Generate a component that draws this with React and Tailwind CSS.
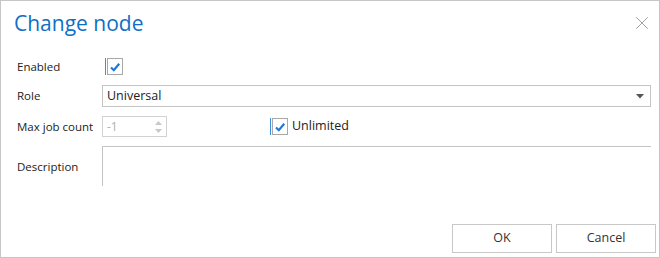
import { X } from 'lucide-react';

const Check = () => (
  <span className="flex h-[17px] items-stretch">
    <span className="w-px bg-[#3d8fdf]" />
    <span className="ml-px flex h-[17px] w-[16px] items-center justify-center border border-[#a8a8a8] bg-white">
      <svg width="12" height="12" viewBox="0 0 12 12">
        <path d="M2 6.5 L4.8 9.2 L10.2 2.8" fill="none" stroke="#1f78d8" strokeWidth="2.2" />
      </svg>
    </span>
  </span>
);

export default function App() {
  return (
    <div
      className="relative h-[258px] w-[660px] border border-[#c6c6c6] bg-white text-[#222]"
      style={{ fontFamily: '"Open Sans", "Liberation Sans", sans-serif' }}
    >
      {/* Header */}
      <div className="flex items-start justify-between pl-[13px] pr-[6px] pt-[6px]">
        <h1 className="text-[21px] leading-[32px] font-normal text-[#0f6fc6]">Change node</h1>
        <X size={22} strokeWidth={1} className="mt-[5px] text-[#9a9a9a]" />
      </div>

      {/* Form */}
      <div className="mt-[19px] flex flex-col pl-[16px] pr-[8px] text-[11.5px]">
        <div className="flex h-[17px] items-center">
          <span className="w-[88px]">Enabled</span>
          <Check />
        </div>

        <div className="mt-[10px] flex h-[22px] items-center">
          <span className="w-[85px]">Role</span>
          <div className="flex h-[22px] flex-1 items-center justify-between border border-[#c4c4c4] pl-[4px] pr-[6px] text-[12.5px]">
            <span>Universal</span>
            <svg width="8" height="5" viewBox="0 0 8 5">
              <path d="M0 0 H8 L4 4.5 Z" fill="#555" />
            </svg>
          </div>
        </div>

        <div className="mt-[9px] flex h-[21px] items-center">
          <span className="w-[85px] whitespace-nowrap">Max job count</span>
          <div className="flex h-[21px] w-[65px] items-center justify-between border border-[#d2d2d2] pl-[4px] pr-[4px] text-[12px] text-[#b0b0b0]">
            <span>-1</span>
            <span className="flex flex-col gap-[4px]">
              <svg width="7" height="4" viewBox="0 0 7 4"><path d="M0 4 H7 L3.5 0 Z" fill="#c8c8c8" /></svg>
              <svg width="7" height="4" viewBox="0 0 7 4"><path d="M0 0 H7 L3.5 4 Z" fill="#c8c8c8" /></svg>
            </span>
          </div>
          <div className="ml-[103px] flex items-center">
            <Check />
            <span className="ml-[4px] text-[12.5px]">Unlimited</span>
          </div>
        </div>

        <div className="mt-[9px] flex h-[40px]">
          <span className="flex w-[85px] items-center pt-[2px]">Description</span>
          <div className="h-[40px] flex-1 border-l border-t border-[#c4c4c4]" />
        </div>
      </div>

      {/* Buttons */}
      <div className="absolute bottom-[4px] right-[3px] flex gap-[4px] text-[12.5px] text-[#333]">
        <button className="h-[29px] w-[100px] border border-[#c8c8c8] bg-white">OK</button>
        <button className="h-[29px] w-[100px] border border-[#c8c8c8] bg-white">Cancel</button>
      </div>
    </div>
  );
}
